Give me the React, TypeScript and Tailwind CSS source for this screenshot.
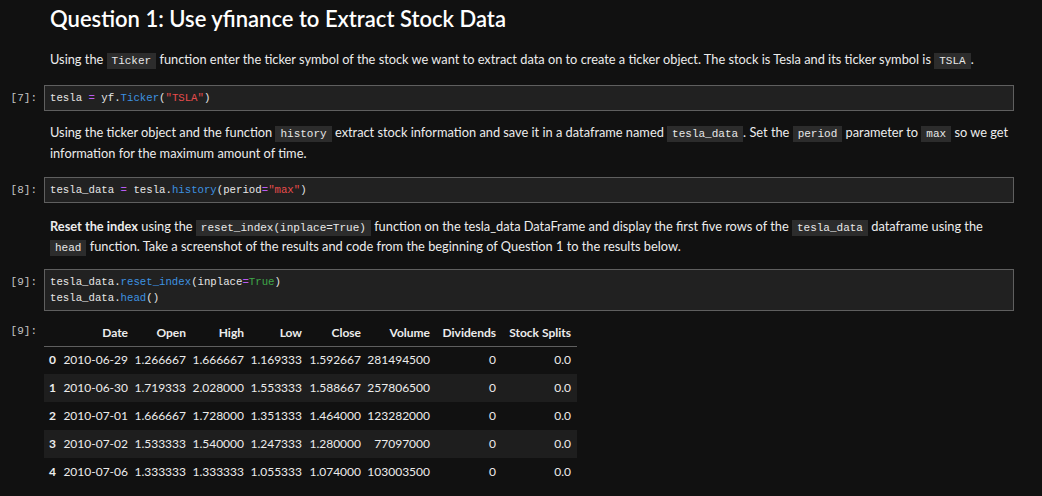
import React from 'react';

const mono = "font-['Liberation_Mono','DejaVu_Sans_Mono',monospace]";
const sans = "font-['Lato','Noto_Sans',sans-serif]";

const Code: React.FC<{ children: React.ReactNode }> = ({ children }) => (
  <code className={`${mono} text-[11px] leading-none bg-[#2c2c2c] text-[#e8e8e8] px-[5px] py-[2px]`}>{children}</code>
);

const Prompt: React.FC<{ n: number; top?: string }> = ({ n, top = 'pt-[5px]' }) => (
  <div className={`${mono} ${top} w-[44px] shrink-0 pr-[7px] text-right text-[11px] leading-4 text-[#c4c4c4]`}>[{n}]:</div>
);

const CodeCell: React.FC<{ n: number; children: React.ReactNode; className?: string }> = ({ n, children, className = '' }) => (
  <div className={`flex pr-[28px] ${className}`}>
    <Prompt n={n} />
    <div className={`${mono} flex-1 border border-[#5f5f5f] bg-[#212121] px-[5px] py-[4px] text-[10.7px] leading-4 text-[#e6e6e6] whitespace-pre`}>
      {children}
    </div>
  </div>
);

const Md: React.FC<{ children: React.ReactNode; className?: string }> = ({ children, className = '' }) => (
  <div className={`flex ${className}`}>
    <div className="w-[44px] shrink-0" />
    <div className="flex-1 pl-[6px] pr-[28px]">{children}</div>
  </div>
);

const eq = 'text-[#b85cf0]';
const fn = 'text-[#3d91e0]';
const str = 'text-[#e84c4c]';
const kw = 'text-[#3fa649]';

interface Row {
  date: string;
  open: string;
  high: string;
  low: string;
  close: string;
  volume: string;
}

const rows: Row[] = [
  { date: '2010-06-29', open: '1.266667', high: '1.666667', low: '1.169333', close: '1.592667', volume: '281494500' },
  { date: '2010-06-30', open: '1.719333', high: '2.028000', low: '1.553333', close: '1.588667', volume: '257806500' },
  { date: '2010-07-01', open: '1.666667', high: '1.728000', low: '1.351333', close: '1.464000', volume: '123282000' },
  { date: '2010-07-02', open: '1.533333', high: '1.540000', low: '1.247333', close: '1.280000', volume: '77097000' },
  { date: '2010-07-06', open: '1.333333', high: '1.333333', low: '1.055333', close: '1.074000', volume: '103003500' },
];

const headers: { label: string; w: string }[] = [
  { label: '', w: 'w-[18px]' },
  { label: 'Date', w: 'w-[72px]' },
  { label: 'Open', w: 'w-[58px]' },
  { label: 'High', w: 'w-[58px]' },
  { label: 'Low', w: 'w-[58px]' },
  { label: 'Close', w: 'w-[59px]' },
  { label: 'Volume', w: 'w-[69px]' },
  { label: 'Dividends', w: 'w-[66px]' },
  { label: 'Stock Splits', w: 'w-[75px]' },
];

export default function App() {
  return (
    <div className={`${sans} min-h-screen w-full bg-[#111111] text-[#ececec] text-[12.8px] pt-[4px]`}>
      {/* Heading */}
      <Md>
        <h2 className="text-[22px] font-semibold leading-[30px] text-white">
          Question 1: Use yfinance to Extract Stock Data
        </h2>
      </Md>

      <Md className="mt-[15px]">
        <p className="leading-[21px]">
          Using the <Code>Ticker</Code> function enter the ticker symbol of the stock we want to extract data on to create a ticker object. The stock is Tesla and its ticker symbol is <Code>TSLA</Code>.
        </p>
      </Md>

      <CodeCell n={7} className="mt-[15px]">
        tesla <span className={eq}>=</span> yf.<span className={fn}>Ticker</span>(<span className={str}>"TSLA"</span>)
      </CodeCell>

      <Md className="mt-[11px]">
        <p className="leading-[21px]">
          Using the ticker object and the function <Code>history</Code> extract stock information and save it in a dataframe named <Code>tesla_data</Code>. Set the <Code>period</Code> parameter to <Code>max</Code> so we get information for the maximum amount of time.
        </p>
      </Md>

      <CodeCell n={8} className="mt-[13px]">
        tesla_data <span className={eq}>=</span> tesla.<span className={fn}>history</span>(period<span className={eq}>=</span><span className={str}>"max"</span>)
      </CodeCell>

      <Md className="mt-[13px]">
        <p className="leading-[20px]">
          <strong className="font-bold">Reset the index</strong> using the <Code>reset_index(inplace=True)</Code> function on the tesla_data DataFrame and display the first five rows of the <Code>tesla_data</Code> dataframe using the <Code>head</Code> function. Take a screenshot of the results and code from the beginning of Question 1 to the results below.
        </p>
      </Md>

      <CodeCell n={9} className="mt-[13px]">
        {'tesla_data.'}<span className={fn}>reset_index</span>(inplace<span className={eq}>=</span><span className={kw}>True</span>){'\n'}
        {'tesla_data.'}<span className={fn}>head</span>()
      </CodeCell>

      {/* Output */}
      <div className="flex mt-[10px]">
        <Prompt n={9} top="pt-[2px]" />
        <table className="w-[533px] table-fixed border-collapse text-[12px] text-[#ececec] whitespace-nowrap">
          <thead>
            <tr className="border-b border-[#5f5f5f]">
              {headers.map((h) => (
                <th key={h.label || 'idx'} className={`${h.w} h-[25px] pr-[6px] text-right font-bold align-middle`}>
                  {h.label}
                </th>
              ))}
            </tr>
          </thead>
          <tbody>
            {rows.map((r, i) => (
              <tr key={i} className={i % 2 === 1 ? 'bg-[#1e1e1e]' : ''}>
                <th className="h-[28px] pr-[6px] text-right font-bold">{i}</th>
                <td className="pr-[6px] text-right">{r.date}</td>
                <td className="pr-[6px] text-right">{r.open}</td>
                <td className="pr-[6px] text-right">{r.high}</td>
                <td className="pr-[6px] text-right">{r.low}</td>
                <td className="pr-[6px] text-right">{r.close}</td>
                <td className="pr-[6px] text-right">{r.volume}</td>
                <td className="pr-[6px] text-right">0</td>
                <td className="pr-[6px] text-right">0.0</td>
              </tr>
            ))}
          </tbody>
        </table>
      </div>
    </div>
  );
}
